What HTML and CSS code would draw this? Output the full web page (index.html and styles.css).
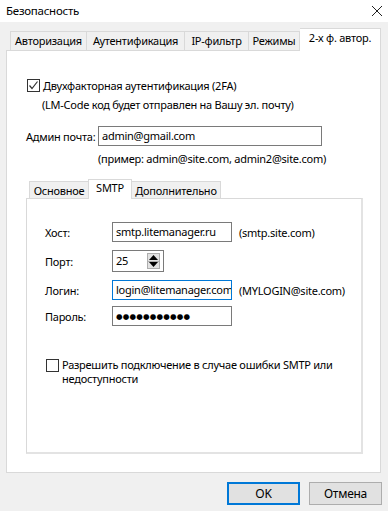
FILE: index.html
```html
<!DOCTYPE html>
<html lang="ru">
<head>
    <meta charset="UTF-8">
    <title>Безопасность</title>
    <link rel="stylesheet" href="styles.css">
</head>
<body>
    <div class="window">
        <div class="titlebar">
            <span class="title">Безопасность</span>
            <svg class="close" width="12" height="12" viewBox="0 0 12 12">
                <path d="M1 1 L11 11 M11 1 L1 11" stroke="#222" stroke-width="1" fill="none"/>
            </svg>
        </div>

        <div class="tabs">
            <div class="tab t1">Авторизация</div>
            <div class="tab t2">Аутентификация</div>
            <div class="tab t3">IP-фильтр</div>
            <div class="tab t4">Режимы</div>
            <div class="tab active t5">2-х ф. автор.</div>
        </div>

        <div class="panel">
            <label class="check-row">
                <span class="checkbox checked">
                    <svg width="11" height="11" viewBox="0 0 11 11">
                        <path d="M1.5 5.5 L4 8.5 L9.5 1.5" stroke="#333" stroke-width="1.2" fill="none"/>
                    </svg>
                </span>
                Двухфакторная аутентификация (2FA)
            </label>
            <div class="note">(LM-Code код будет отправлен на Вашу эл. почту)</div>

            <div class="mail-row">
                <span class="mail-label">Админ почта:</span>
                <div class="input mail-input">admin@gmail.com</div>
            </div>
            <div class="hint-mail">(пример: admin@site.com, admin2@site.com)</div>

            <div class="subtabs">
                <div class="subtab s1">Основное</div>
                <div class="subtab active s2">SMTP</div>
                <div class="subtab s3">Дополнительно</div>
            </div>

            <div class="subpanel">
                <div class="form-row r1">
                    <span class="f-label">Хост:</span>
                    <div class="input f-input">smtp.litemanager.ru</div>
                    <span class="f-hint">(smtp.site.com)</span>
                </div>
                <div class="form-row r2">
                    <span class="f-label">Порт:</span>
                    <div class="input spin">
                        <span>25</span>
                        <div class="spin-btns">
                            <div class="spin-btn">
                                <svg width="9" height="5" viewBox="0 0 9 5"><path d="M0 5 L4.5 0 L9 5 Z" fill="#000"/></svg>
                            </div>
                            <div class="spin-btn">
                                <svg width="9" height="5" viewBox="0 0 9 5"><path d="M0 0 L4.5 5 L9 0 Z" fill="#000"/></svg>
                            </div>
                        </div>
                    </div>
                </div>
                <div class="form-row r3">
                    <span class="f-label">Логин:</span>
                    <div class="input f-input focused">login@litemanager.com<span class="caret"></span></div>
                    <span class="f-hint">(MYLOGIN@site.com)</span>
                </div>
                <div class="form-row r4">
                    <span class="f-label">Пароль:</span>
                    <div class="input f-input pass">●●●●●●●●●●●</div>
                </div>

                <label class="check-row allow">
                    <span class="checkbox"></span>
                    <span class="allow-text">Разрешить подключение в случае ошибки SMTP или<br>недоступности</span>
                </label>
            </div>
        </div>

        <div class="buttons">
            <button class="btn default">OK</button>
            <button class="btn">Отмена</button>
        </div>
    </div>
</body>
</html>
```

FILE: styles.css
```css
body {
    margin: 0;
    font-family: "Noto Sans", "Liberation Sans", sans-serif;
    font-size: 11px;
    letter-spacing: -0.25px;
    color: #000;
    background: #f0f0f0;
}

.window {
    width: 388px;
    height: 511px;
    background: #f0f0f0;
    overflow: hidden;
    white-space: nowrap;
}

.titlebar {
    height: 22px;
    background: #fff;
    display: flex;
    align-items: center;
    justify-content: space-between;
    padding: 0 5px 0 6px;
}

.title {
    font-size: 11.5px;
    margin-top: -2px;
}

/* outer tabs */
.tabs {
    display: flex;
    align-items: flex-end;
    height: 28px;
    padding-left: 10px;
}

.tab {
    height: 18px;
    line-height: 18px;
    text-align: center;
    background: #f0f0f0;
    border: 1px solid #d9d9d9;
    border-bottom: none;
    border-right: none;
}

.tab.t1 { width: 75px; }
.tab.t2 { width: 97px; }
.tab.t3 { width: 63px; }
.tab.t4 { width: 50px; border-right: 1px solid #d9d9d9; }

.tab.active {
    width: 80px;
    height: 22px;
    line-height: 18px;
    background: #fff;
    border-right: 1px solid #d9d9d9;
    margin-bottom: -1px;
    position: relative;
    z-index: 1;
}

.tab.t5 { border-left: none; }

.panel {
    margin-left: 6px;
    width: 375px;
    height: 423px;
    background: #fff;
    border: 1px solid #d9d9d9;
    padding-top: 27px;
    box-sizing: border-box;
}

.check-row {
    display: flex;
    align-items: center;
    padding-left: 20px;
    gap: 3px;
}

.checkbox {
    width: 11px;
    height: 11px;
    border: 1px solid #333;
    background: #fff;
    display: flex;
    align-items: center;
    justify-content: center;
    flex-shrink: 0;
}

.note {
    padding-left: 35px;
    margin-top: 4px;
}

.mail-row {
    display: flex;
    align-items: center;
    margin-top: 14px;
    padding-left: 19px;
}

.mail-label {
    width: 72px;
}

.input {
    height: 18px;
    line-height: 18px;
    border: 1px solid #7a7a7a;
    background: #fff;
    padding-left: 3px;
    overflow: hidden;
}

.mail-input {
    width: 219px;
}

.hint-mail {
    padding-left: 91px;
    margin-top: 5px;
}

/* inner tabs */
.subtabs {
    display: flex;
    align-items: flex-end;
    height: 22px;
    margin-top: 10px;
    padding-left: 22px;
}

.subtab {
    height: 16px;
    line-height: 17px;
    text-align: center;
    background: #f0f0f0;
    border: 1px solid #d9d9d9;
    border-bottom: none;
}

.subtab.s1 { width: 58px; border-right: none; }
.subtab.s2 {
    width: 42px;
    height: 19px;
    line-height: 15px;
    background: #fff;
    margin-bottom: -1px;
    position: relative;
    z-index: 1;
}
.subtab.s3 { width: 88px; border-left: none; }

.subpanel {
    margin-left: 19px;
    width: 337px;
    height: 256px;
    border: 1px solid #d9d9d9;
    border-right: 2px solid #e3e3e3;
    border-bottom: 2px solid #e3e3e3;
    box-sizing: border-box;
    padding-top: 23px;
}

.form-row {
    display: flex;
    align-items: center;
    padding-left: 18px;
    height: 20px;
}

.r2 { margin-top: 8px; height: 22px; }
.r3 { margin-top: 8px; }
.r4 { margin-top: 6px; }

.f-label {
    width: 67px;
}

.f-input {
    width: 115px;
}

.f-hint {
    margin-left: 7px;
}

.focused {
    border-color: #0078d7;
}

.caret {
    display: inline-block;
    width: 1px;
    height: 14px;
    background: #000;
    vertical-align: -3px;
    margin-left: 1px;
}

.pass {
    font-family: "DejaVu Sans", sans-serif;
    font-size: 7.5px;
    letter-spacing: 0.2px;
    line-height: 19px;
}

.spin {
    width: 44px;
    height: 20px;
    display: flex;
    align-items: center;
    justify-content: space-between;
    padding-right: 3px;
}

.spin-btns {
    display: flex;
    flex-direction: column;
    width: 13px;
    height: 16px;
    border: 1px solid #adadad;
    box-sizing: border-box;
}

.spin-btn {
    flex: 1;
    background: #e1e1e1;
    display: flex;
    align-items: center;
    justify-content: center;
}

.spin-btn + .spin-btn {
    border-top: 1px solid #adadad;
}

.allow {
    align-items: flex-start;
    padding-left: 19px;
    margin-top: 32px;
    line-height: 14px;
}

.allow .checkbox {
    margin-top: 1px;
}

.buttons {
    display: flex;
    justify-content: flex-end;
    gap: 9px;
    padding-right: 6px;
    margin-top: 9px;
}

.btn {
    width: 73px;
    height: 23px;
    font-family: inherit;
    font-size: 12px;
    letter-spacing: inherit;
    background: #e1e1e1;
    border: 1px solid #adadad;
    padding: 0;
}

.btn.default {
    border: 2px solid #0078d7;
}
```
